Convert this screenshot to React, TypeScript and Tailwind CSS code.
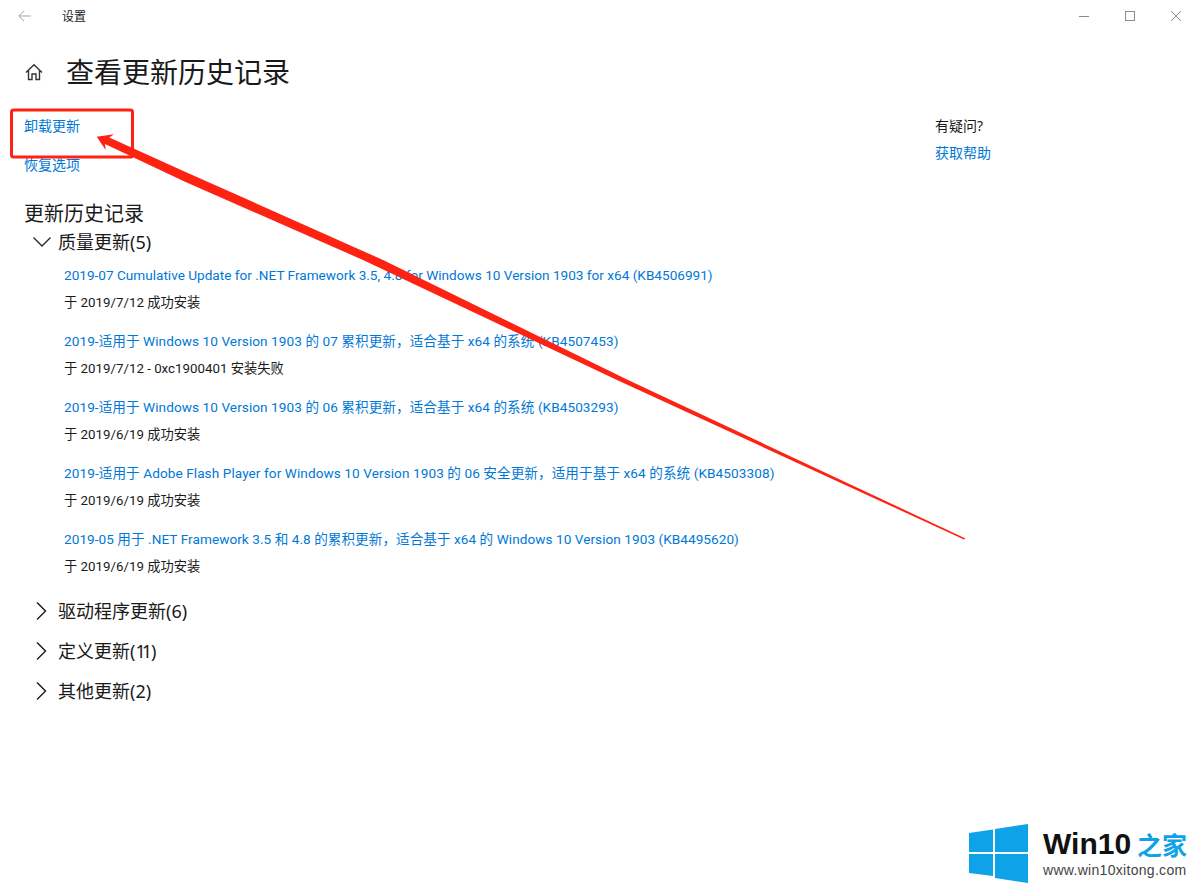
const font = { fontFamily: '"Noto Sans", "Noto Sans CJK SC", sans-serif' };
const itemFont = { fontFamily: 'Roboto, "Noto Sans CJK SC", sans-serif' };

const updates = [
  {
    title: '2019-07 Cumulative Update for .NET Framework 3.5, 4.8 for Windows 10 Version 1903 for x64 (KB4506991)',
    status: '于 2019/7/12 成功安装',
    spacing: 'tracking-normal',
  },
  {
    title: '2019-适用于 Windows 10 Version 1903 的 07 累积更新，适合基于 x64 的系统 (KB4507453)',
    status: '于 2019/7/12 - 0xc1900401 安装失败',
    spacing: 'tracking-[0.07px]',
  },
  {
    title: '2019-适用于 Windows 10 Version 1903 的 06 累积更新，适合基于 x64 的系统 (KB4503293)',
    status: '于 2019/6/19 成功安装',
    spacing: 'tracking-[0.07px]',
  },
  {
    title: '2019-适用于 Adobe Flash Player for Windows 10 Version 1903 的 06 安全更新，适用于基于 x64 的系统 (KB4503308)',
    status: '于 2019/6/19 成功安装',
    spacing: 'tracking-[0.08px]',
  },
  {
    title: '2019-05 用于 .NET Framework 3.5 和 4.8 的累积更新，适合基于 x64 的 Windows 10 Version 1903 (KB4495620)',
    status: '于 2019/6/19 成功安装',
    spacing: 'tracking-[0.05px]',
  },
];

function TitleBar() {
  return (
    <div className="flex h-8 items-center pl-[18px] text-[#1a1a1a]">
      <svg width="13" height="12" viewBox="0 0 13 12" fill="none" stroke="#a3a3a3" strokeWidth="1">
        <path d="M12.5 6H1M6 0.8L0.8 6L6 11.2" />
      </svg>
      <span className="ml-[31px] mt-[2px] text-xs">设置</span>
      <div className="ml-auto flex items-center gap-[36px] pr-[64px]">
        <div className="h-px w-[10px] bg-[#8c8c8c]" />
        <div className="h-[10px] w-[10px] border border-[#8c8c8c]" />
      </div>
      <svg className="absolute right-[18px] top-[11px]" width="10" height="10" viewBox="0 0 10 10" stroke="#8c8c8c" strokeWidth="1">
        <path d="M0 0L10 10M10 0L0 10" />
      </svg>
    </div>
  );
}

function Arrow() {
  return (
    <svg className="pointer-events-none absolute left-0 top-0" width="1199" height="895">
      <rect x="11.5" y="110" width="121" height="47" rx="2" fill="none" stroke="#fe2213" strokeWidth="3" />
      <polygon
        points="96.7,136.7 114,134.3 109.3,137.5 185,171.7 383,260 628,380 965.5,538.5 964,539.5 617,380 363,260 185,181.7 105,144 105.7,150"
        fill="#fe2213"
      />
    </svg>
  );
}

function Watermark() {
  return (
    <div className="absolute left-[969px] top-[824px] flex items-start bg-white">
      <svg width="60" height="60" viewBox="0 0 60 60" fill="#0ea2e8">
        <polygon points="0,9 24,5.5 24,28 0,28" />
        <polygon points="26,5 59,0 59,28 26,28" />
        <polygon points="0,30 24,30 24,52 0,49" />
        <polygon points="26,30 59,30 59,59 26,54" />
      </svg>
      <div className="ml-[14px] mt-[4px] flex flex-col">
        <div className="flex h-[32px] items-center">
          <span className="text-[30px] font-bold leading-none text-[#111]" style={{ fontFamily: '"Liberation Sans", sans-serif' }}>
            Win10
          </span>
          <span className="ml-[6px] text-[25px] font-bold leading-none text-[#0ea2e8]" style={{ fontFamily: '"Noto Sans CJK SC", sans-serif' }}>
            之家
          </span>
        </div>
        <span className="mt-[3px] whitespace-nowrap text-[14px] leading-none tracking-[0.3px] text-[#444]" style={{ fontFamily: '"Liberation Sans", sans-serif' }}>
          www.win10xitong.com
        </span>
      </div>
    </div>
  );
}

function Collapsed({ children }: { children: React.ReactNode }) {
  return (
    <div className="flex h-[28px] items-center">
      <svg className="ml-[12px]" width="11" height="18" viewBox="0 0 11 18" fill="none" stroke="#222" strokeWidth="1.5">
        <path d="M1 0.5L9.5 9L1 17.5" />
      </svg>
      <span className="ml-[11px] text-[18px]">{children}</span>
    </div>
  );
}

export default function App() {
  return (
    <div className="relative h-[895px] w-[1199px] overflow-hidden bg-white text-[#1a1a1a]" style={font}>
      <TitleBar />

      <div className="mb-1 flex h-[80px] items-center pl-[25px]">
        <svg width="18" height="18" viewBox="0 0 18 18" fill="none" stroke="#333" strokeWidth="1.4">
          <path d="M1 9.5L9 1.8L17 9.5M3.5 7.5V16.5H7V11H11V16.5H14.5V7.5" />
        </svg>
        <h1 className="ml-[23px] text-[28px] leading-none font-normal">查看更新历史记录</h1>
      </div>

      <div className="flex pl-6">
        <div className="w-[911px]">
          <a className="block h-[20px] text-sm leading-5 text-[#0078d7]">卸载更新</a>
          <a className="mt-[19px] block h-[20px] text-sm leading-5 text-[#0078d7]">恢复选项</a>

          <h2 className="mt-[25px] text-xl leading-[28px] font-normal">更新历史记录</h2>

          <div className="flex h-[28px] items-center">
            <svg className="ml-[9px]" width="18" height="10" viewBox="0 0 18 10" fill="none" stroke="#222" strokeWidth="1.3">
              <path d="M0.5 0.5L9 9L17.5 0.5" />
            </svg>
            <span className="ml-[7px] text-[18px]">质量更新(5)</span>
          </div>

          <div className="mt-[9px] flex flex-col gap-[26px] pl-10" style={itemFont}>
            {updates.map((u) => (
              <div key={u.title} className="flex h-[40px] flex-col">
                <a className={`h-[20px] whitespace-nowrap text-[13.6px] leading-5 text-[#0078d7] ${u.spacing}`}>{u.title}</a>
                <span className="mt-[8px] h-[19px] text-[13.3px] leading-5">{u.status}</span>
              </div>
            ))}
          </div>

          <div className="mt-[28px] flex flex-col gap-[12px]">
            <Collapsed>驱动程序更新(6)</Collapsed>
            <Collapsed>
              定义更新(<span className="tracking-[-4px]">11</span><span className="ml-[3px]">)</span>
            </Collapsed>
            <Collapsed>其他更新(2)</Collapsed>
          </div>
        </div>

        <div className="flex flex-col">
          <span className="h-[20px] text-sm leading-5">有疑问?</span>
          <a className="mt-[7px] h-[20px] text-sm leading-5 text-[#0078d7]">获取帮助</a>
        </div>
      </div>

      <Arrow />
      <Watermark />
    </div>
  );
}
